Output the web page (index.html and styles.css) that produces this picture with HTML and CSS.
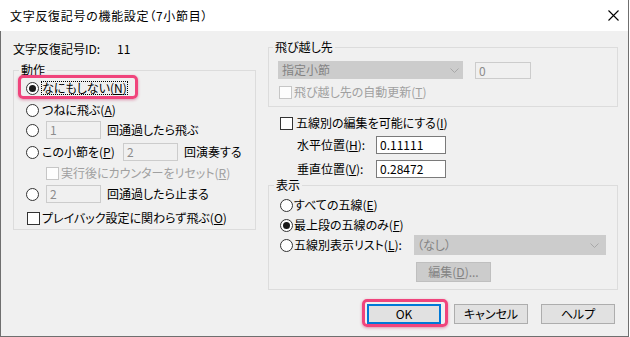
FILE: index.html
```html
<!DOCTYPE html>
<html lang="ja">
<head>
<meta charset="utf-8">
<title>文字反復記号の機能設定</title>
<link rel="stylesheet" href="styles.css">
</head>
<body>
<div class="window">
  <div class="titlebar">
    <span class="title">文字反復記号の機能設定（7小節目）</span>
    <span class="close"><svg width="11" height="11" viewBox="0 0 11 11"><path d="M0.5 0.5L10.5 10.5M10.5 0.5L0.5 10.5" stroke="#000" stroke-width="1.1" fill="none"/></svg></span>
  </div>
  <div class="body">
    <div class="main">
      <div class="col-left">
        <div class="id-row"><span>文字反復記号ID:</span><span class="id-val">11</span></div>
        <fieldset class="group group-action">
          <legend>動作</legend>
          <div class="action-grid">
            <div class="row">
              <span class="radio checked"></span>
              <span class="focus">なにもしない(<u>N</u>)</span>
              <span class="hl hl-radio"></span>
            </div>
            <div class="row"><span class="radio"></span><span class="lbl">つねに飛ぶ(<u>A</u>)</span></div>
            <div class="row"><span class="radio"></span><span class="input dis w55 gap7">1</span><span class="after">回通過したら飛ぶ</span></div>
            <div class="row"><span class="radio"></span><span class="lbl w81">この小節を(<u>P</u>)</span><span class="input dis w55">2</span><span class="after">回演奏する</span></div>
            <div class="row"><span class="check dis indent20"></span><span class="lbl2 dis-text">実行後にカウンターをリセット(<u>R</u>)</span></div>
            <div class="row"><span class="radio"></span><span class="input dis w55 gap7">2</span><span class="after">回通過したら止まる</span></div>
            <div class="row"><span class="check indent1"></span><span class="lbl2">プレイバック設定に関わらず飛ぶ(<u>O</u>)</span></div>
          </div>
        </fieldset>
      </div>
      <div class="col-right">
        <fieldset class="group group-jump">
          <legend>飛び越し先</legend>
          <div class="jump-body">
            <div class="jump-row1">
              <span class="select sel-jump"><span>指定小節</span><svg class="chev" width="9" height="5" viewBox="0 0 9 5"><path d="M0.5 0.5L4.5 4.5L8.5 0.5" stroke="#a8a8a8" fill="none"/></svg></span>
              <span class="input dis w56 gap12 h17">0</span>
            </div>
            <div class="jump-row2"><span class="check dis indent1"></span><span class="lbl2 dis-text">飛び越し先の自動更新(<u>T</u>)</span></div>
          </div>
        </fieldset>
        <div class="edit-row"><span class="check"></span><span class="lbl">五線別の編集を可能にする(<u>I</u>)</span></div>
        <div class="pos-row"><span class="pos-label">水平位置(<u>H</u>):</span><span class="input w70">0.11111</span></div>
        <div class="pos-row pos-row2"><span class="pos-label">垂直位置(<u>V</u>):</span><span class="input w70">0.28472</span></div>
        <fieldset class="group group-view">
          <legend>表示</legend>
          <div class="view-body">
            <div class="vrow"><span class="radio"></span><span class="lbl1">すべての五線(<u>E</u>)</span></div>
            <div class="vrow"><span class="radio checked"></span><span class="lbl1">最上段の五線のみ(<u>F</u>)</span></div>
            <div class="vrow"><span class="radio"></span><span class="lbl1 w120">五線別表示リスト(<u>L</u>):</span>
              <span class="select sel-list"><span>（なし）</span><svg class="chev" width="9" height="5" viewBox="0 0 9 5"><path d="M0.5 0.5L4.5 4.5L8.5 0.5" stroke="#a8a8a8" fill="none"/></svg></span>
            </div>
            <div class="edit-btn-row"><span class="btn btn-dis">編集(<u>D</u>)...</span></div>
          </div>
        </fieldset>
      </div>
    </div>
    <div class="buttons">
      <span class="btn btn-default">OK<span class="hl hl-btn"></span></span>
      <span class="btn">キャンセル</span>
      <span class="btn">ヘルプ</span>
    </div>
  </div>
</div>
</body>
</html>
```
FILE: styles.css
```css
* { box-sizing: border-box; }
html, body { margin: 0; padding: 0; }
body {
  font-family: "Noto Sans CJK JP", "Noto Sans", sans-serif;
  font-size: 12px;
  line-height: 14px;
  color: #000;
  background: #fff;
  font-feature-settings: "palt";
}
u { text-decoration: underline; text-underline-offset: 1px; }

.window {
  width: 629px;
  height: 337px;
  display: flex;
  flex-direction: column;
  border-right: 1px solid #6f6f6f;
}
.titlebar {
  height: 31px;
  flex: none;
  background: #fff;
  display: flex;
  align-items: center;
  padding-left: 10px;
}
.title { flex: 1; letter-spacing: 0.7px; }
.close { display: flex; width: 11px; height: 11px; margin-right: 9px; }

.body {
  flex: 1;
  background: #f0f0f0;
  border-left: 1px solid #6f6f6f;
  border-bottom: 1px solid #6f6f6f;
  display: flex;
  flex-direction: column;
}
.main {
  display: flex;
  gap: 12px;
  padding: 9px 0 0 12px;
}
.col-left { width: 243px; display: flex; flex-direction: column; }
.col-right { width: 350px; display: flex; flex-direction: column; }

.id-row { margin-top: 2px; height: 14px; display: flex; }
.id-val { margin-left: 17px; }

.group {
  margin: 0;
  padding: 0;
  border: 1px solid #dcdcdc;
  min-width: 0;
}
.group legend {
  padding: 0 2px;
  margin-left: 4px;
  height: 14px;
  line-height: 14px;
}
.group-action { margin-top: 7px; }
.group-action legend { margin-left: 5px; }

.action-grid {
  display: grid;
  grid-template-rows: 22px 22px 18px 26px 16px 26px 22px;
  padding-left: 12px;
}
.row { display: flex; align-items: center; position: relative; }

.radio {
  flex: none;
  width: 13px;
  height: 13px;
  border: 1px solid #333;
  border-radius: 50%;
  background: #fff;
  display: flex;
  align-items: center;
  justify-content: center;
}
.radio.checked::after {
  content: "";
  width: 7px;
  height: 7px;
  border-radius: 50%;
  background: #1a1a1a;
}
.check {
  flex: none;
  width: 13px;
  height: 13px;
  border: 1px solid #333;
  background: #fff;
}
.check.dis { border-color: #c6c6c6; background: #fdfdfd; }
.indent20 { margin-left: 20px; }
.indent1 { margin-left: 1px; }

.lbl { margin-left: 3px; white-space: nowrap; }
.lbl1 { margin-left: 1px; white-space: nowrap; }
.lbl2 { margin-left: 2px; white-space: nowrap; }
.w81 { width: 81px; flex: none; }
.w120 { width: 120px; flex: none; }
.focus {
  margin-left: 2px;
  border: 1px dotted #000;
  line-height: 12px;
  white-space: nowrap;
}
.dis-text { color: #a0a0a0; }

.input {
  flex: none;
  height: 18px;
  border: 1px solid #7a7a7a;
  background: #fff;
  padding-left: 3px;
  line-height: 16px;
  white-space: nowrap;
}
.input.dis { border-color: #cccccc; background: #f0f0f0; color: #8c8c8c; }
.w55 { width: 55px; }
.w56 { width: 56px; }
.w70 { width: 70px; }
.h17 { height: 17px; line-height: 15px; }
.gap7 { margin-left: 7px; }
.gap12 { margin-left: 12px; }
.after { margin-left: 6px; white-space: nowrap; }

.jump-body { padding: 7px 0 4px 9px; }
.jump-row1 { display: flex; align-items: center; height: 18px; }
.jump-row2 { display: flex; align-items: center; height: 20px; margin-top: 3px; }

.select {
  flex: none;
  display: flex;
  align-items: center;
  justify-content: space-between;
  background: #cccccc;
  border: 1px solid #cccccc;
  color: #838383;
  white-space: nowrap;
}
.sel-jump { width: 185px; height: 18px; padding: 0 3px 0 3px; }
.sel-list { width: 192px; height: 20px; padding: 0 6px 0 2px; }
.chev { flex: none; }

.edit-row {
  display: flex;
  align-items: center;
  height: 20px;
  margin-top: 6px;
  padding-left: 12px;
}
.pos-row {
  display: flex;
  align-items: center;
  height: 18px;
  margin-top: 3px;
  padding-left: 29px;
}
.pos-row2 { margin-top: 6px; }
.pos-label { width: 79px; flex: none; white-space: nowrap; }

.group-view legend { margin-left: 5px; }
.view-body { padding: 3px 0 7px 11px; }
.vrow { display: flex; align-items: center; height: 20px; }
.edit-btn-row { display: flex; margin-top: 7px; padding-left: 136px; }

.btn {
  flex: none;
  position: relative;
  width: 74px;
  height: 20px;
  background: #e1e1e1;
  border: 1px solid #adadad;
  display: flex;
  align-items: center;
  justify-content: center;
  white-space: nowrap;
}
.btn-dis { width: 75px; background: #cccccc; border-color: #bfbfbf; color: #838383; }
.btn-default { border: 2px solid #0078d7; }

.buttons {
  display: flex;
  justify-content: flex-end;
  gap: 13px;
  margin-top: 14px;
  padding-right: 13px;
}

.hl {
  position: absolute;
  border: 3px solid #f0447c;
  border-radius: 5px;
  box-shadow: 0 1px 3px rgba(200, 30, 90, 0.45);
  pointer-events: none;
}
.hl-radio { left: -8px; top: -2px; width: 120px; height: 24px; }
.hl-btn { left: -7px; top: -7px; width: 86px; height: 28px; }
```
